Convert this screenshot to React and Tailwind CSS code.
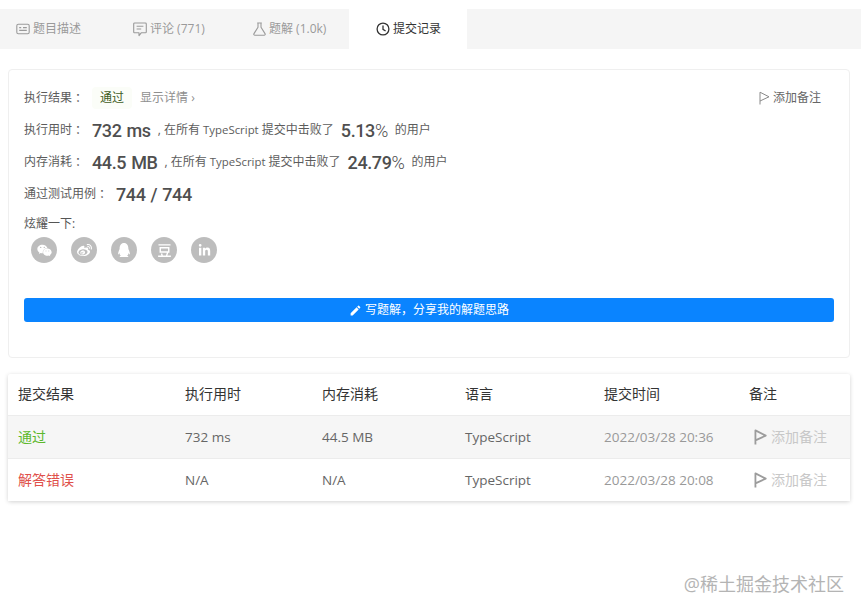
import React from "react";
import { FaWeixin, FaWeibo, FaQq, FaLinkedinIn } from "react-icons/fa";
import { RiDoubanLine } from "react-icons/ri";
import { MdEdit } from "react-icons/md";

const Flag = ({ size = 14, sw = 1.2, className = "" }) => (
  <svg width={size} height={size} viewBox="0 0 14 14" fill="none" stroke="currentColor" strokeWidth={sw} className={className}>
    <path d="M3 13.5V1.2L12 5.8L3 10" strokeLinejoin="round" />
  </svg>
);

const DescIcon = () => (
  <svg width="14" height="14" viewBox="0 0 14 14" fill="none" stroke="currentColor" strokeWidth="1.1">
    <rect x="0.8" y="2.2" width="12.4" height="9.6" rx="1.5" />
    <path d="M3.2 5.6h2M3.2 8.4h7.6M7 5.6h3.8" />
  </svg>
);
const ChatIcon = () => (
  <svg width="14" height="15" viewBox="0 0 14 15" fill="none" stroke="currentColor" strokeWidth="1.1">
    <path d="M1.6 1h10.8a.9.9 0 0 1 .9.9v8a.9.9 0 0 1-.9.9H8.2L6 13.6V10.8H1.6a.9.9 0 0 1-.9-.9v-8A.9.9 0 0 1 1.6 1Z" strokeLinejoin="round" />
    <path d="M3.6 4.2h6.8M3.6 7h4.6" />
  </svg>
);
const FlaskIcon = () => (
  <svg width="13" height="14" viewBox="0 0 13 14" fill="none" stroke="currentColor" strokeWidth="1.1">
    <path d="M4.2 1h4.6M5 1v4.2L1 11.6c-.5.8 0 1.6.9 1.6h9.2c.9 0 1.4-.8.9-1.6L8 5.2V1" strokeLinejoin="round" />
  </svg>
);
const ClockIcon = () => (
  <svg width="14" height="14" viewBox="0 0 14 14" fill="none" stroke="currentColor" strokeWidth="1.3">
    <circle cx="7" cy="7" r="5.9" />
    <path d="M7 3.4V7.3L9.6 9" />
  </svg>
);

const Tab = ({ w, icon, label, active }) => (
  <div className={`flex h-full items-center gap-[3px] text-[12px] ${w} ${active ? "bg-white text-[#333333]" : "text-[#9a9a9a]"}`}>
    {icon}
    <span>{label}</span>
  </div>
);

const Big = ({ children, unit, className = "" }) => (
  <span className={`text-[18px] font-medium tracking-[-0.4px] [word-spacing:1px] text-[#4f4f4f] ${className}`} style={{ fontFamily: "Roboto, sans-serif" }}>
    {children}
    {unit && <span className="font-light">{unit}</span>}
  </span>
);

const StatRow = ({ label, value, pct }) => (
  <div className="flex h-[32px] items-center text-[12px] text-[#5c5c5c]">
    <span className="w-[68px] shrink-0">{label}</span>
    <Big>{value}</Big>
    <span className="ml-[7px]">, 在所有 <span className="text-[11.4px]">TypeScript</span> 提交中击败了</span>
    <Big className="ml-[7px]" unit="%">{pct}</Big>
    <span className="ml-[7px]">的用户</span>
  </div>
);

const Social = ({ children }) => (
  <div className="flex h-[26px] w-[26px] items-center justify-center rounded-full bg-[#bdbdbd] text-white">{children}</div>
);

const Row = ({ children, className = "" }) => (
  <div className={`flex items-center px-[10px] ${className}`}>{children}</div>
);

const Note = () => (
  <div className="flex items-center gap-[3px] pl-[3px] text-[14px] text-[#c8c8c8]">
    <Flag size={16} sw={1.6} className="text-[#9c9c9c]" />
    <span className="pb-[2px]">添加备注</span>
  </div>
);

const rows = [
  { r: "通过", c: "text-[#5cb82c]", t: "732 ms", m: "44.5 MB", d: "2022/03/28 20:36", bg: "bg-[#f6f6f6]", h: "h-[43px] border-b border-[#ececec]" },
  { r: "解答错误", c: "text-[#e0504a]", t: "N/A", m: "N/A", d: "2022/03/28 20:08", bg: "bg-white", h: "h-[42px]" },
];

export default function App() {
  return (
    <div className="relative h-[612px] w-[861px] overflow-hidden bg-white pt-[9px]" style={{ fontFamily: '"Open Sans", "Noto Sans CJK SC", sans-serif' }}>
      <div className="flex h-[40px] bg-[#f5f5f5]">
        <Tab w="w-[117px] pl-[16px]" icon={<DescIcon />} label="题目描述" />
        <Tab w="w-[119px] pl-[16px]" icon={<ChatIcon />} label="评论 (771)" />
        <Tab w="w-[113px] pl-[17px]" icon={<FlaskIcon />} label="题解 (1.0k)" />
        <Tab w="w-[118px] pl-[27px]" active icon={<ClockIcon />} label="提交记录" />
      </div>

      <div className="ml-[8px] mt-[20px] flex h-[289px] w-[842px] flex-col rounded-[4px] border border-[#efefef] px-[15px] pt-[12px]">
        <div className="flex h-[32px] items-center text-[12px] text-[#5c5c5c]">
          <span className="w-[68px] shrink-0">执行结果 ：</span>
          <span className="rounded-[4px] bg-[#fbfdf8] px-[8px] py-[2px] text-[#3f5c25]">通过</span>
          <span className="ml-[8px] text-[#8f8f8f]">显示详情 ›</span>
          <div className="ml-auto mr-[13px] flex items-center gap-[2px] text-[#666666]">
            <Flag size={14} sw={1} className="text-[#8a8a8a]" />
            <span>添加备注</span>
          </div>
        </div>
        <StatRow label="执行用时 ：" value="732 ms" pct="5.13" />
        <StatRow label="内存消耗 ：" value="44.5 MB" pct="24.79" />
        <div className="flex h-[32px] items-center text-[12px] text-[#5c5c5c]">
          <span className="w-[92px] shrink-0">通过测试用例 ：</span>
          <Big>744 / 744</Big>
        </div>
        <div className="mt-[6px] text-[12px] leading-[16px] text-[#555555]">炫耀一下:</div>
        <div className="mt-[5px] flex gap-[14px] pl-[7px]">
          <Social><FaWeixin size={15} /></Social>
          <Social><FaWeibo size={15} /></Social>
          <Social><FaQq size={14} /></Social>
          <Social><RiDoubanLine size={17} /></Social>
          <Social><FaLinkedinIn size={13} /></Social>
        </div>
        <div className="mt-[35px] flex h-[24px] items-center justify-center gap-[3px] rounded-[3px] bg-[#0a84ff] text-[12px] text-white">
          <MdEdit size={13} />
          <span>写题解，分享我的解题思路</span>
        </div>
      </div>

      <div className="ml-[8px] mt-[16px] w-[842px] rounded-[2px] bg-white shadow-[0_1px_4px_rgba(0,0,0,0.18)]">
        <Row className="h-[42px] border-b border-[#ececec] pb-[2px] text-[14px] text-[#333333]">
          <span className="w-[167px]">提交结果</span>
          <span className="w-[137px]">执行用时</span>
          <span className="w-[143px]">内存消耗</span>
          <span className="w-[139px]">语言</span>
          <span className="w-[145px]">提交时间</span>
          <span>备注</span>
        </Row>
        {rows.map((x) => (
          <Row key={x.r} className={`${x.h} ${x.bg} text-[13.5px] text-[#666666]`}>
            <span className={`w-[167px] pb-[2px] text-[14px] ${x.c}`}>{x.r}</span>
            <span className="w-[137px]">{x.t}</span>
            <span className="w-[143px]">{x.m}</span>
            <span className="w-[139px]">TypeScript</span>
            <span className="w-[145px] text-[#999999]">{x.d}</span>
            <Note />
          </Row>
        ))}
      </div>

      <div className="absolute right-[17px] top-[573px] text-[18px] leading-[22px] text-[#b4b4b4]">@稀土掘金技术社区</div>
    </div>
  );
}
